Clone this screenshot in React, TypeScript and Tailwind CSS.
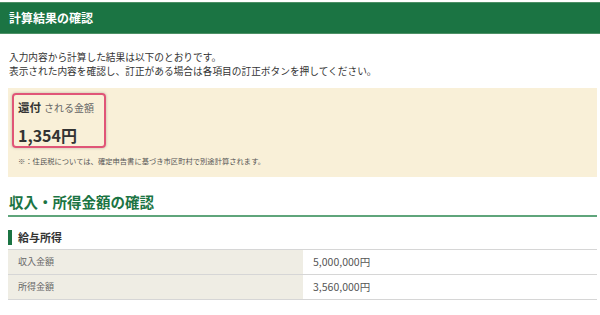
import React from "react";

export default function App() {
  const font = { fontFamily: '"Noto Sans CJK JP", "Noto Sans", sans-serif' };
  return (
    <div className="w-[600px] h-[315px] overflow-hidden bg-white text-[#333]" style={font}>
      <div className="pt-[2px]">
        <div className="h-[32px] bg-[#1b7443] flex items-center px-[9px] border-t border-b border-[#4d9066]">
          <span className="text-white text-[12px] font-bold leading-none">計算結果の確認</span>
        </div>
      </div>

      <div className="px-[9px] pt-[16px] text-[9.7px] leading-[14px] text-[#333] whitespace-nowrap">
        <p>入力内容から計算した結果は以下のとおりです。</p>
        <p>表示された内容を確認し、訂正がある場合は各項目の訂正ボタンを押してください。</p>
      </div>

      <div className="mx-[8px] mt-[10px] w-[589px] h-[89px] bg-[#f9f0d8] pt-[5px] pl-[4px] flex flex-col items-start">
        <div className="w-[94px] h-[55px] shrink-0 border-2 border-[#e05577] rounded-[4px] shadow-[0_0_3px_rgba(0,0,0,0.25)] px-[4px] pt-[4px] flex flex-col whitespace-nowrap">
          <div className="flex items-baseline gap-[3px] leading-[16px]">
            <span className="text-[11.5px] font-bold text-[#333]">還付</span>
            <span className="text-[10px] text-[#666]">される金額</span>
          </div>
          <div className="mt-[9px] text-[16px] font-bold leading-[20px] text-[#333]">1,354円</div>
        </div>
        <p className="mt-[8px] pl-[6px] text-[7.3px] leading-[10px] text-[#555] whitespace-nowrap">
          ※：住民税については、確定申告書に基づき市区町村で別途計算されます。
        </p>
      </div>

      <div className="mx-[8px] mt-[15px] w-[589px] border-b-2 border-[#5fa57b] pb-[3px]">
        <h2 className="text-[14.5px] font-bold leading-[20px] text-[#1b7443] pl-[1px]">収入・所得金額の確認</h2>
      </div>

      <div className="mx-[8px] mt-[12px] flex items-center h-[17px]">
        <div className="w-[4px] h-[15px] bg-[#1b7443]" />
        <span className="ml-[6px] text-[11px] font-bold leading-none text-[#333]">給与所得</span>
      </div>

      <div className="mx-[8px] mt-[3px] w-[589px] border-t border-[#d6d6d6]">
        {[
          ["収入金額", "5,000,000円"],
          ["所得金額", "3,560,000円"],
        ].map(([k, v]) => (
          <div key={k} className="flex h-[25px] border-b border-[#d6d6d6]">
            <div className="w-[295px] bg-[#efede4] flex items-center pl-[10px] text-[9px] text-[#666]">{k}</div>
            <div className="flex-1 flex items-center pl-[10px] text-[10.5px] text-[#555]">{v}</div>
          </div>
        ))}
      </div>
    </div>
  );
}
